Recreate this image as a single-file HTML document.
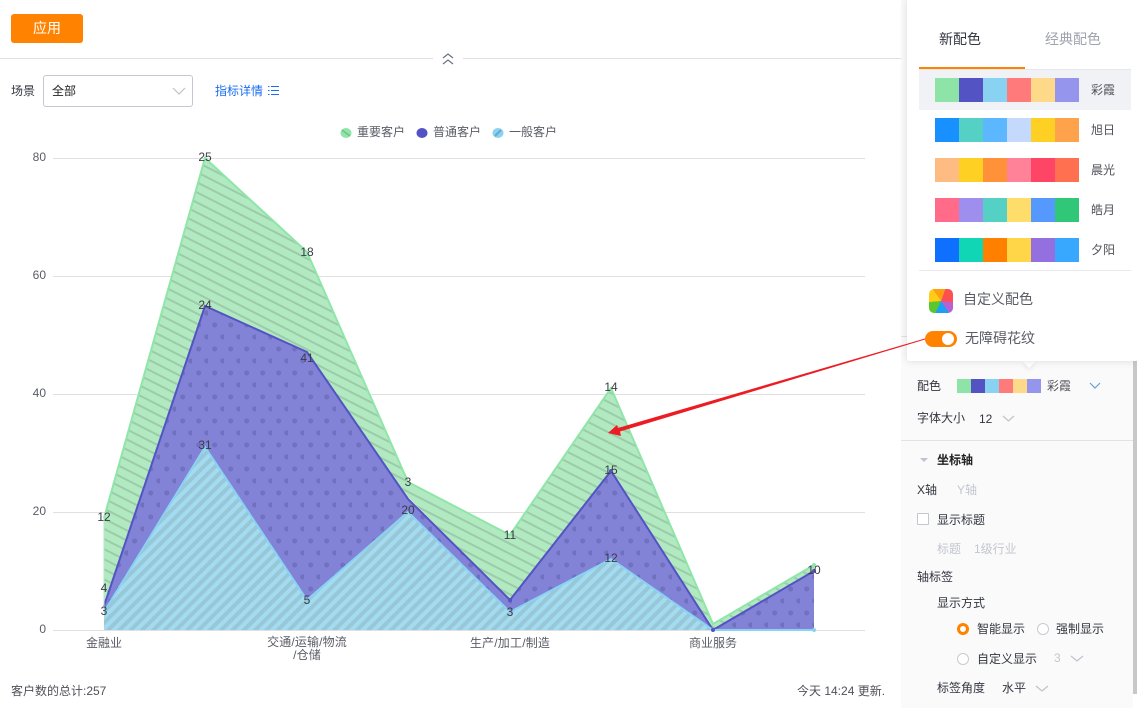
<!DOCTYPE html>
<html><head><meta charset="utf-8">
<style>
html,body{margin:0;padding:0;background:#fff}
body{width:1137px;height:708px;position:relative;overflow:hidden;font:12px/16px "Liberation Sans","Noto Sans CJK SC",sans-serif;color:#50505a}
.t{position:absolute;white-space:nowrap;line-height:16px}
.b{position:absolute}
.d{color:#333640}
.g{color:#c4c6d0}
.sw{position:absolute;display:flex;left:935px;height:24px}
.sw i{display:block;width:24px;height:24px}
.ss{position:absolute;display:flex;left:957px;top:379px;height:14px}
.ss i{display:block;width:14px;height:14px}
.rad{position:absolute;width:10px;height:10px;border:1px solid #c8cad4;border-radius:50%;background:#fff}
svg{position:absolute;left:0;top:0}
</style></head><body>

<div class="b" style="left:11px;top:14px;width:72px;height:29px;background:#ff8200;border-radius:3px;color:#fff;font-size:14px;line-height:29px;text-align:center">应用</div>
<div class="b" style="left:0;top:58px;width:433px;height:1px;background:#e0e0e8"></div>
<div class="b" style="left:463px;top:58px;width:438px;height:1px;background:#e0e0e8"></div>

<div class="t d" style="left:11px;top:83px">场景</div>
<div class="b" style="left:43px;top:75px;width:148px;height:30px;border:1px solid #c4c6d2;border-radius:3px;background:#fff"></div>
<div class="t" style="left:52px;top:83px;color:#222">全部</div>
<div class="t" style="left:215px;top:83px;color:#1a6cf0">指标详情</div>

<div class="t" style="left:357px;top:124px;color:#5a5c66">重要客户</div>
<div class="t" style="left:433px;top:124px;color:#5a5c66">普通客户</div>
<div class="t" style="left:509px;top:124px;color:#5a5c66">一般客户</div>

<svg width="1137" height="708" viewBox="0 0 1137 708">
<defs>
<pattern id="pg" width="9" height="9" patternUnits="userSpaceOnUse" patternTransform="rotate(27)">
<rect width="9" height="9" fill="#b1e9c1"/>
<rect x="0" y="0" width="9" height="2" fill="#9dcba9"/>
</pattern>
<pattern id="pp" width="16" height="24" patternUnits="userSpaceOnUse">
<rect width="16" height="24" fill="#8282d6"/>
<circle cx="6.700" cy="13" r="2.500" fill="#6f70be"/>
<circle cx="14.700" cy="1" r="2.500" fill="#6f70be"/>
<circle cx="14.700" cy="25" r="2.500" fill="#6f70be"/>
</pattern>
<pattern id="pb" width="8" height="8" patternUnits="userSpaceOnUse" patternTransform="rotate(45)">
<rect width="8" height="8" fill="#a3dcf0"/>
<rect x="0" y="0" width="4" height="8" fill="#98c7d8"/>
</pattern>
</defs>
<g stroke="#e0e0e3" stroke-width="1">
<path d="M53 158.500H865M53 276.500H865M53 394.500H865M53 512.500H865M53 630.500H865"/>
</g>
<path d="M104 518L205 158L307 252L408 482L510 535L611 388L713 624L814 565L814 571L713 630L611 471L510 600L408 497L307 352L205 306L104 606Z" fill="url(#pg)"/>
<path d="M104 518L205 158L307 252L408 482L510 535L611 388L713 624L814 565" fill="none" stroke="#8fe6a8" stroke-width="2"/>
<path d="M104 606L205 306L307 352L408 499L510 600L611 471L713 630L814 571L814 630L713 630L611 559L510 612L408 512L307 600L205 447L104 612Z" fill="url(#pp)"/>
<path d="M104 606L205 306L307 352L408 499L510 600L611 471L713 630L814 571" fill="none" stroke="#5353c3" stroke-width="2"/>
<path d="M104 612L205 447L307 600L408 512L510 612L611 559L713 630L814 630L814 630L104 630Z" fill="url(#pb)"/>
<path d="M104 612L205 447L307 600L408 512L510 612L611 559L713 630L814 630" fill="none" stroke="#8ad2f2" stroke-width="2"/>
<path d="M104 518V612" stroke="#b1e9c1" stroke-width="1"/>
<circle cx="814" cy="630" r="2" fill="#8ad2f2"/>
<circle cx="713" cy="630" r="2" fill="#5353c3"/>
<circle cx="814" cy="571" r="2" fill="#5353c3"/>
<circle cx="814" cy="565" r="2" fill="#8fe6a8"/>
<circle cx="510" cy="600" r="2" fill="#5353c3"/>
<circle cx="611" cy="471" r="2" fill="#5353c3"/>
<g font-family="Liberation Sans" font-size="12" fill="#3a3c46" text-anchor="middle">
<text x="104" y="521">12</text><text x="205" y="161">25</text><text x="307" y="256">18</text><text x="408" y="486">3</text><text x="510" y="539">11</text><text x="611" y="391">14</text>
<text x="104" y="592">4</text><text x="205" y="309">24</text><text x="307" y="362">41</text><text x="408" y="514">20</text><text x="510" y="616">3</text><text x="611" y="474">15</text><text x="814" y="574">10</text>
<text x="104" y="615">3</text><text x="205" y="449">31</text><text x="307" y="604">5</text><text x="611" y="562">12</text>
</g>
<g font-family="Liberation Sans" font-size="12" fill="#5a5c66" text-anchor="end">
<text x="46" y="161">80</text><text x="46" y="279">60</text><text x="46" y="397">40</text><text x="46" y="515">20</text><text x="46" y="633">0</text>
</g>
<path d="M443 58L448 54L453 58M443 64L448 60L453 64" fill="none" stroke="#6b7280" stroke-width="1.200"/>
<path d="M173 88L179 94L185 88" fill="none" stroke="#c0c2cc" stroke-width="1.200"/>
<g stroke="#1a6cf0" stroke-width="1"><path d="M271 86.500H279M271 90.500H279M271 94.500H279"/><path d="M268 86.500H269.500M268 90.500H269.500M268 94.500H269.500"/></g>
<ellipse cx="346" cy="133" rx="5.500" ry="5" fill="#8fe6a8"/><path d="M342 130L350 136" stroke="#74bf8a" stroke-width="1.500"/>
<ellipse cx="422" cy="133" rx="5.500" ry="5" fill="#5353c3"/>
<ellipse cx="498" cy="133" rx="5.500" ry="5" fill="#8ad2f2"/><path d="M495 136L501 130" stroke="#6aa8c8" stroke-width="2"/>
</svg>

<div class="t" style="left:74px;top:635px;width:60px;text-align:center;color:#5a5c66">金融业</div>
<div class="t" style="left:257px;top:636px;width:100px;text-align:center;color:#5a5c66;line-height:13px;letter-spacing:.15px">交通/运输/物流<br>/仓储</div>
<div class="t" style="left:460px;top:635px;width:100px;text-align:center;color:#5a5c66;letter-spacing:.2px">生产/加工/制造</div>
<div class="t" style="left:673px;top:635px;width:80px;text-align:center;color:#5a5c66">商业服务</div>

<div class="t" style="left:11px;top:683px;color:#50505a">客户数的总计:257</div>
<div class="t" style="left:797px;top:683px;color:#50505a">今天 14:24 更新.</div>

<!-- right panel -->
<div class="b" style="left:901px;top:0;width:232px;height:708px;background:#fafafa"></div>
<div class="b" style="left:1133px;top:361px;width:4px;height:333px;background:#c8c8c8"></div>
<div class="b" style="left:901px;top:336px;width:232px;height:1px;background:#e0e0e8"></div>
<div class="b" style="left:901px;top:440px;width:232px;height:1px;background:#e0e2ea"></div>

<div class="t d" style="left:917px;top:378px">配色</div>
<div class="ss"><i style="background:#8ee4a6"></i><i style="background:#5353c3"></i><i style="background:#8ad2f2"></i><i style="background:#ff7b7b"></i><i style="background:#ffd98a"></i><i style="background:#9595ee"></i></div>
<div class="t" style="left:1047px;top:378px;color:#50505a">彩霞</div>
<div class="t d" style="left:917px;top:410px">字体大小</div>
<div class="t d" style="left:979px;top:411px">12</div>
<div class="t" style="left:937px;top:452px;color:#222;font-weight:bold">坐标轴</div>
<div class="t d" style="left:917px;top:482px">X轴</div>
<div class="t g" style="left:957px;top:482px">Y轴</div>
<div class="b" style="left:917px;top:513px;width:10px;height:10px;border:1px solid #c4c6d0;border-radius:1px;background:#fff"></div>
<div class="t d" style="left:937px;top:512px">显示标题</div>
<div class="t g" style="left:937px;top:541px">标题</div>
<div class="t g" style="left:974px;top:541px">1级行业</div>
<div class="t d" style="left:917px;top:569px">轴标签</div>
<div class="t d" style="left:937px;top:595px">显示方式</div>
<div class="b" style="left:957px;top:623px;width:6px;height:6px;border:3px solid #ff8200;border-radius:50%;background:#fff"></div>
<div class="t d" style="left:977px;top:621px">智能显示</div>
<div class="rad" style="left:1037px;top:623px"></div>
<div class="t d" style="left:1056px;top:621px">强制显示</div>
<div class="rad" style="left:957px;top:653px"></div>
<div class="t d" style="left:977px;top:651px">自定义显示</div>
<div class="t g" style="left:1054px;top:650px">3</div>
<div class="t d" style="left:937px;top:680px">标签角度</div>
<div class="t d" style="left:1002px;top:680px">水平</div>

<svg width="1137" height="708" viewBox="0 0 1137 708" style="pointer-events:none">
<path d="M1090 383L1095 388L1100 383" fill="none" stroke="#6aa0d0" stroke-width="1.200"/>
<path d="M1003 416L1008.500 421L1014 416" fill="none" stroke="#c0c2cc" stroke-width="1.200"/>
<path d="M920 458H928L924 462Z" fill="#c0c2cc"/>
<path d="M1071 656L1077 661L1083 656" fill="none" stroke="#c0c2cc" stroke-width="1.200"/>
<path d="M1036 686L1042 691L1048 686" fill="none" stroke="#c0c2cc" stroke-width="1.200"/>
</svg>

<!-- popup -->
<div class="b" style="left:1024px;top:356px;width:10px;height:10px;background:#fff;transform:rotate(45deg);box-shadow:2px 2px 4px rgba(0,0,0,.06)"></div>
<div class="b" style="left:907px;top:0;width:230px;height:361px;background:#fff;border-radius:0 0 3px 3px;box-shadow:0 0 8px rgba(60,60,90,.16)"></div>
<div class="t" style="left:939px;top:31px;font-size:14px;color:#333640">新配色</div>
<div class="t" style="left:1045px;top:31px;font-size:14px;color:#a0a3ad">经典配色</div>
<div class="b" style="left:919px;top:69px;width:212px;height:1px;background:#e6e6ec"></div>
<div class="b" style="left:919px;top:67px;width:106px;height:2px;background:#ff8200"></div>
<div class="b" style="left:919px;top:70px;width:212px;height:40px;background:#f1f2f6"></div>

<div class="sw" style="top:78px"><i style="background:#8ee4a6"></i><i style="background:#5353c3"></i><i style="background:#8ad2f2"></i><i style="background:#ff7b7b"></i><i style="background:#ffd98a"></i><i style="background:#9595ee"></i></div>
<div class="t" style="left:1091px;top:82px">彩霞</div>
<div class="sw" style="top:118px"><i style="background:#1890ff"></i><i style="background:#55d0c5"></i><i style="background:#5cb7ff"></i><i style="background:#c5d9fd"></i><i style="background:#ffd024"></i><i style="background:#ffa24c"></i></div>
<div class="t" style="left:1091px;top:122px">旭日</div>
<div class="sw" style="top:158px"><i style="background:#ffbc82"></i><i style="background:#ffd024"></i><i style="background:#ff9138"></i><i style="background:#ff8299"></i><i style="background:#ff4566"></i><i style="background:#ff7050"></i></div>
<div class="t" style="left:1091px;top:162px">晨光</div>
<div class="sw" style="top:198px"><i style="background:#ff6b88"></i><i style="background:#9e8fee"></i><i style="background:#55d0c5"></i><i style="background:#ffdd6b"></i><i style="background:#5599ff"></i><i style="background:#30c878"></i></div>
<div class="t" style="left:1091px;top:202px">皓月</div>
<div class="sw" style="top:238px"><i style="background:#0f6fff"></i><i style="background:#10d6b5"></i><i style="background:#ff8000"></i><i style="background:#ffd648"></i><i style="background:#946fe0"></i><i style="background:#38a8ff"></i></div>
<div class="t" style="left:1091px;top:242px">夕阳</div>
<div class="b" style="left:919px;top:270px;width:212px;height:1px;background:#e8e8ee"></div>

<div class="b" style="left:929px;top:289px;width:24px;height:24px;border-radius:5px;background:conic-gradient(from 0deg,#ffa012 0deg 20deg,#ff5050 20deg 95deg,#bc60d0 95deg 145deg,#1ca0f4 145deg 205deg,#5ac82c 205deg 265deg,#ffcc18 265deg 325deg,#ffa012 325deg 360deg)"></div>
<div class="t" style="left:963px;top:291px;font-size:14px;color:#5a5c66">自定义配色</div>
<div class="b" style="left:925px;top:331px;width:32px;height:16px;background:#ff8200;border-radius:8px"></div>
<div class="b" style="left:942px;top:333px;width:12px;height:12px;background:#fff;border-radius:50%"></div>
<div class="t" style="left:965px;top:330px;font-size:14px;color:#5a5c66">无障碍花纹</div>

<svg width="1137" height="708" viewBox="0 0 1137 708" style="pointer-events:none">
<path d="M925 338.500L925 339.500L620 431.500L621 436L608 433L617 425L618 428Z" fill="#ed1c24"/>
</svg>
</body></html>
